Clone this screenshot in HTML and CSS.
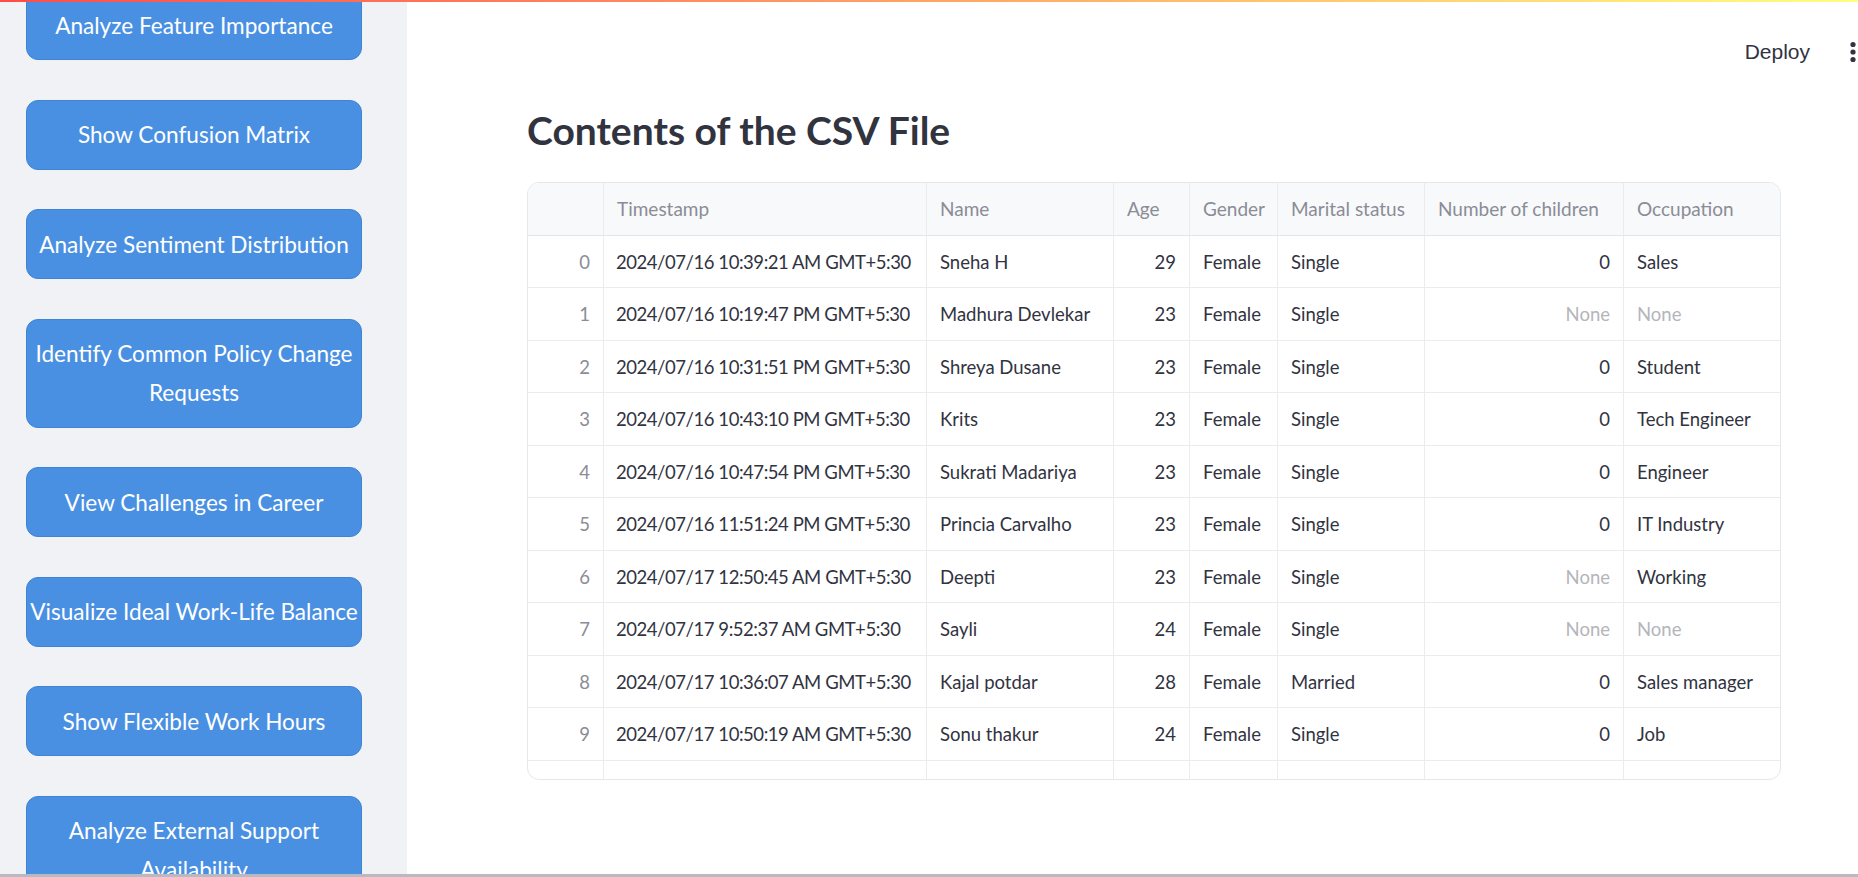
FILE: index.html
```html
<!DOCTYPE html>
<html lang="en">
<head>
<meta charset="utf-8">
<title>Contents of the CSV File</title>
<link rel="stylesheet" href="styles.css">
</head>
<body>
<div class="decoration"></div>
<div class="app">
  <aside class="sidebar">
    <div class="btn-list">
      <button class="btn">Analyze Feature Importance</button>
      <button class="btn">Show Confusion Matrix</button>
      <button class="btn">Analyze Sentiment Distribution</button>
      <button class="btn">Identify Common Policy Change<br>Requests</button>
      <button class="btn">View Challenges in Career</button>
      <button class="btn">Visualize Ideal Work-Life Balance</button>
      <button class="btn">Show Flexible Work Hours</button>
      <button class="btn">Analyze External Support<br>Availability</button>
    </div>
  </aside>
  <main class="main">
    <header class="topbar">
      <span class="deploy">Deploy</span>
      <svg class="menu" width="10" height="24" viewBox="0 0 10 24"><circle cx="5" cy="4.5" r="2.6" fill="#31333f"/><circle cx="5" cy="12" r="2.6" fill="#31333f"/><circle cx="5" cy="19.5" r="2.6" fill="#31333f"/></svg>
    </header>
    <h3 class="title">Contents of the CSV File</h3>
    <div class="grid-wrap">
      <div class="grid">
        <div class="c h"></div><div class="c h">Timestamp</div><div class="c h">Name</div><div class="c h">Age</div><div class="c h">Gender</div><div class="c h">Marital status</div><div class="c h">Number of children</div><div class="c h">Occupation</div>

        <div class="c idx">0</div><div class="c">2024/07/16 10:39:21 AM GMT+5:30</div><div class="c">Sneha H</div><div class="c num">29</div><div class="c">Female</div><div class="c">Single</div><div class="c num">0</div><div class="c">Sales</div>

        <div class="c idx">1</div><div class="c">2024/07/16 10:19:47 PM GMT+5:30</div><div class="c">Madhura Devlekar</div><div class="c num">23</div><div class="c">Female</div><div class="c">Single</div><div class="c num none">None</div><div class="c none">None</div>

        <div class="c idx">2</div><div class="c">2024/07/16 10:31:51 PM GMT+5:30</div><div class="c">Shreya Dusane</div><div class="c num">23</div><div class="c">Female</div><div class="c">Single</div><div class="c num">0</div><div class="c">Student</div>

        <div class="c idx">3</div><div class="c">2024/07/16 10:43:10 PM GMT+5:30</div><div class="c">Krits</div><div class="c num">23</div><div class="c">Female</div><div class="c">Single</div><div class="c num">0</div><div class="c">Tech Engineer</div>

        <div class="c idx">4</div><div class="c">2024/07/16 10:47:54 PM GMT+5:30</div><div class="c">Sukrati Madariya</div><div class="c num">23</div><div class="c">Female</div><div class="c">Single</div><div class="c num">0</div><div class="c">Engineer</div>

        <div class="c idx">5</div><div class="c">2024/07/16 11:51:24 PM GMT+5:30</div><div class="c">Princia Carvalho</div><div class="c num">23</div><div class="c">Female</div><div class="c">Single</div><div class="c num">0</div><div class="c">IT Industry</div>

        <div class="c idx">6</div><div class="c">2024/07/17 12:50:45 AM GMT+5:30</div><div class="c">Deepti</div><div class="c num">23</div><div class="c">Female</div><div class="c">Single</div><div class="c num none">None</div><div class="c">Working</div>

        <div class="c idx">7</div><div class="c">2024/07/17 9:52:37 AM GMT+5:30</div><div class="c">Sayli</div><div class="c num">24</div><div class="c">Female</div><div class="c">Single</div><div class="c num none">None</div><div class="c none">None</div>

        <div class="c idx">8</div><div class="c">2024/07/17 10:36:07 AM GMT+5:30</div><div class="c">Kajal potdar</div><div class="c num">28</div><div class="c">Female</div><div class="c">Married</div><div class="c num">0</div><div class="c">Sales manager</div>

        <div class="c idx">9</div><div class="c">2024/07/17 10:50:19 AM GMT+5:30</div><div class="c">Sonu thakur</div><div class="c num">24</div><div class="c">Female</div><div class="c">Single</div><div class="c num">0</div><div class="c">Job</div>

        <div class="c idx">10</div><div class="c">2024/07/17 11:02:45 AM GMT+5:30</div><div class="c">Siddhi Kulkarni</div><div class="c num">25</div><div class="c">Male</div><div class="c">Married</div><div class="c num">1</div><div class="c">Service</div>
      </div>
    </div>
  </main>
</div>
<div class="frame-bottom"></div>
</body>
</html>
```

FILE: styles.css
```css
* { box-sizing: border-box; }

html, body {
  margin: 0;
  padding: 0;
  width: 1858px;
  height: 877px;
  overflow: hidden;
  background: #ffffff;
  font-family: Lato, "Noto Sans", sans-serif;
  color: #31333f;
}

.decoration {
  height: 2px;
  background: linear-gradient(90deg, #ff4b4b, #fffd80);
}

.app {
  display: flex;
  height: 872px;
  overflow: hidden;
}

.frame-bottom {
  height: 3px;
  background: #b7babe;
}

/* Sidebar */
.sidebar {
  width: 407px;
  flex: 0 0 407px;
  background: #f0f2f6;
  overflow: hidden;
  padding: 0 26px;
}

.btn-list {
  display: flex;
  flex-direction: column;
  gap: 39.5px;
  margin-top: -12px;
}

.btn {
  display: block;
  width: 336px;
  margin: 0;
  padding: 14.5px 2px;
  border: 1px solid #3f83d4;
  border-radius: 12px;
  background: #4a90e2;
  color: #ffffff;
  font-family: Lato, "Noto Sans", sans-serif;
  font-size: 22.6px;
  line-height: 39px;
  text-align: center;
  white-space: nowrap;
}

/* Main */
.main {
  flex: 1;
  padding-left: 120px;
}

.topbar {
  height: 99px;
  display: flex;
  align-items: center;
  justify-content: flex-end;
  gap: 38px;
}

.deploy {
  font-family: "Liberation Sans", Arial, sans-serif;
  font-size: 21px;
  color: #31333f;
}

.menu {
  display: block;
}

.title {
  margin: 6px 0 28px 0;
  font-family: Lato, "Noto Sans", sans-serif;
  font-size: 39px;
  line-height: 1.2;
  font-weight: 700;
  color: #31333f;
}

/* Data grid */
.grid-wrap {
  width: 1254px;
  height: 598px;
  border: 1px solid #e6e7ea;
  border-radius: 12px;
  overflow: hidden;
}

.grid {
  display: grid;
  grid-template-columns: 76px 323px 187px 76px 88px 147px 199px 156px;
  grid-template-rows: 53px;
  grid-auto-rows: 52.5px;
  font-size: 18.5px;
}

.c {
  display: flex;
  align-items: center;
  padding: 0 13px;
  border-right: 1px solid #ebecef;
  border-bottom: 1px solid #ebecef;
  white-space: nowrap;
  overflow: hidden;
  color: #31333f;
}

.c:nth-child(8n) { border-right: none; }

.c:nth-child(n+2):nth-child(8n+2):not(.h) {
  letter-spacing: -0.45px;
  padding-left: 12px;
}

.h {
  background: #f8f9fb;
  color: #8a8c96;
  font-size: 19px;
  border-bottom-color: #e3e5e9;
}

.idx {
  justify-content: flex-end;
  color: #8a8c96;
}

.num { justify-content: flex-end; }

.none { color: #b4b5bb; }
```
